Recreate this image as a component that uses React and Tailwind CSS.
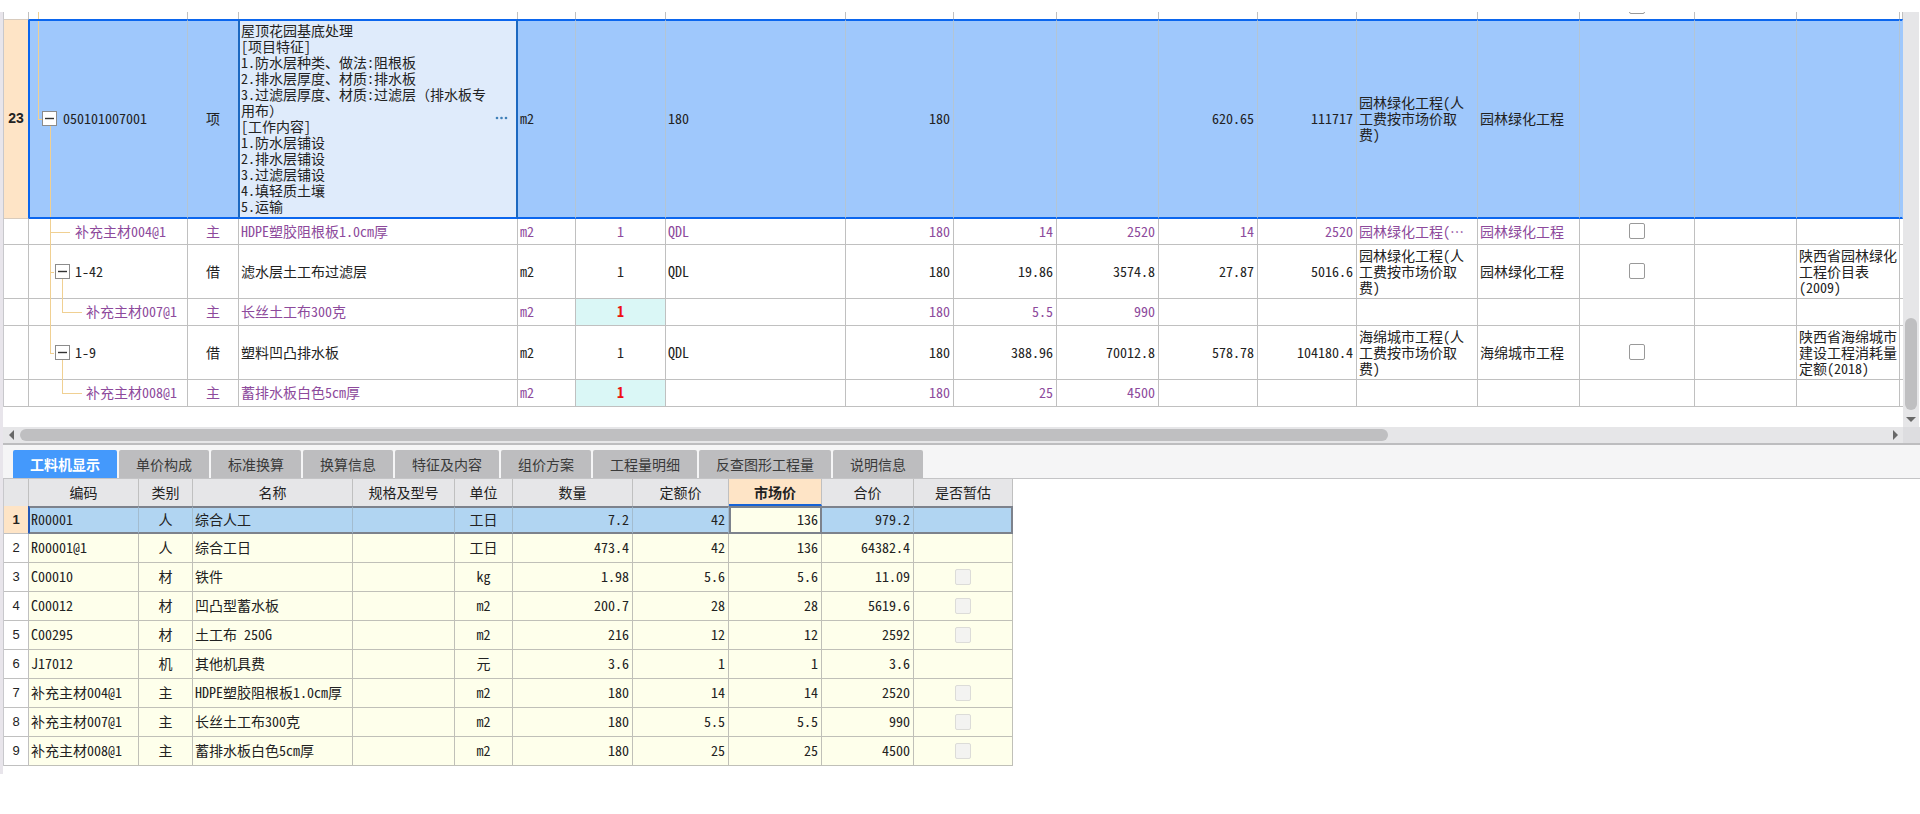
// src/App.jsx
import React, { useState } from 'react';
import clsx from 'clsx';

const FONT = 'font-["Noto_Sans_Mono_CJK_SC","Noto_Sans_CJK_SC",monospace]';

// Lebar kolom tabel atas; kolom tanpa lebar mengisi sisa ruang
const QUOTA_COLS = [
  'w-[25px]', 'w-[159px]', 'w-[51px]', 'w-[279px]', 'w-[58px]', 'w-[90px]', '', 'w-[108px]', 'w-[103px]',
  'w-[102px]', 'w-[99px]', 'w-[99px]', 'w-[121px]', 'w-[102px]', 'w-[115px]', 'w-[102px]', 'w-[103px]', 'w-[3px]',
];

const FEATURES = `屋顶花园基底处理
[项目特征]
1.防水层种类、做法:阻根板
2.排水层厚度、材质:排水板
3.过滤层厚度、材质:过滤层（排水板专
用布）
[工作内容]
1.防水层铺设
2.排水层铺设
3.过滤层铺设
4.填轻质土壤
5.运输`;

// Garis penghubung pohon di kolom kode
const V1_FULL = 'left-[21px] top-0 -bottom-px w-px';
const V1_TOP = 'left-[21px] top-0 bottom-1/2 w-px';
const V2_TOP = 'left-[33px] top-0 bottom-1/2 w-px';
const V2_BOTTOM = 'left-[33px] top-1/2 -bottom-px w-px';
const H1_SHORT = 'left-[21px] top-1/2 w-1 h-px';
const H1_LONG = 'left-[21px] top-1/2 w-5 h-px';
const H2_LONG = 'left-[33px] top-1/2 w-5 h-px';

const QUOTA_ROWS = [
  {
    code: '补充主材004@1', kind: '主', name: 'HDPE塑胶阻根板1.0cm厚', unit: 'm2', factor: '1', expr: 'QDL', qty: '180',
    price: '14', total: '2520', unitCost: '14', sumCost: '2520', fee: '园林绿化工程(⋯', major: '园林绿化工程', check: true,
    height: 'h-[26px]', material: true, indent: 'pl-[46px]', lines: [V1_FULL, H1_LONG],
  },
  {
    code: '1-42', kind: '借', name: '滤水层土工布过滤层', unit: 'm2', factor: '1', expr: 'QDL', qty: '180',
    price: '19.86', total: '3574.8', unitCost: '27.87', sumCost: '5016.6', fee: '园林绿化工程(人\n工费按市场价取\n费)', major: '园林绿化工程', check: true,
    source: '陕西省园林绿化\n工程价目表\n(2009)', height: 'h-[54px]', node: true, indent: 'pl-[46px]', lines: [V1_FULL, H1_SHORT, V2_BOTTOM],
  },
  {
    code: '补充主材007@1', kind: '主', name: '长丝土工布300克', unit: 'm2', factor: '1', qty: '180', price: '5.5', total: '990',
    height: 'h-[27px]', material: true, edited: true, indent: 'pl-[57px]', lines: [V1_FULL, V2_TOP, H2_LONG],
  },
  {
    code: '1-9', kind: '借', name: '塑料凹凸排水板', unit: 'm2', factor: '1', expr: 'QDL', qty: '180',
    price: '388.96', total: '70012.8', unitCost: '578.78', sumCost: '104180.4', fee: '海绵城市工程(人\n工费按市场价取\n费)', major: '海绵城市工程', check: true,
    source: '陕西省海绵城市\n建设工程消耗量\n定额(2018)', height: 'h-[54px]', node: true, indent: 'pl-[46px]', lines: [V1_TOP, H1_SHORT, V2_BOTTOM],
  },
  {
    code: '补充主材008@1', kind: '主', name: '蓄排水板白色5cm厚', unit: 'm2', factor: '1', qty: '180', price: '25', total: '4500',
    height: 'h-[27px]', material: true, edited: true, indent: 'pl-[57px]', lines: [V2_TOP, H2_LONG],
  },
];

const TABS = ['工料机显示', '单价构成', '标准换算', '换算信息', '特征及内容', '组价方案', '工程量明细', '反查图形工程量', '说明信息'];

const RES_COLS = [
  { label: '', width: 'w-[25px]' },
  { label: '编码', width: 'w-[110px]' },
  { label: '类别', width: 'w-[54px]' },
  { label: '名称', width: 'w-[160px]' },
  { label: '规格及型号', width: 'w-[102px]' },
  { label: '单位', width: 'w-[58px]' },
  { label: '数量', width: 'w-[120px]' },
  { label: '定额价', width: 'w-[96px]' },
  { label: '市场价', width: 'w-[93px]' },
  { label: '合价', width: 'w-[92px]' },
  { label: '是否暂估', width: 'w-[99px]' },
];

const RES_ROWS = [
  ['R00001', '人', '综合人工', '工日', '7.2', '42', '136', '979.2', false],
  ['R00001@1', '人', '综合工日', '工日', '473.4', '42', '136', '64382.4', false],
  ['C00010', '材', '铁件', 'kg', '1.98', '5.6', '5.6', '11.09', true],
  ['C00012', '材', '凹凸型蓄水板', 'm2', '200.7', '28', '28', '5619.6', true],
  ['C00295', '材', '土工布 250G', 'm2', '216', '12', '12', '2592', true],
  ['J17012', '机', '其他机具费', '元', '3.6', '1', '1', '3.6', false],
  ['补充主材004@1', '主', 'HDPE塑胶阻根板1.0cm厚', 'm2', '180', '14', '14', '2520', true],
  ['补充主材007@1', '主', '长丝土工布300克', 'm2', '180', '5.5', '5.5', '990', true],
  ['补充主材008@1', '主', '蓄排水板白色5cm厚', 'm2', '180', '25', '25', '4500', true],
];

const TreeLines = ({ lines }) =>
  lines.map((line) => <span key={line} className={clsx('absolute bg-[#f0d092]', line)} />);

const NodeToggle = ({ className }) => (
  <button
    type="button"
    aria-label="折叠"
    className={clsx('absolute top-1/2 -mt-2 size-[15px] border border-[#8c8c8c] bg-white flex items-center justify-center', className)}
  >
    <svg width="9" height="9" viewBox="0 0 9 9" aria-hidden="true">
      <path d="M0 4.5h9" stroke="#333" strokeWidth="1.4" />
    </svg>
  </button>
);

const CheckBox = ({ label, disabled = false }) => (
  <input
    type="checkbox"
    aria-label={label}
    disabled={disabled}
    className={clsx(
      'block shrink-0 mx-auto size-4 appearance-none rounded-xs border checked:bg-[#4499fc]',
      disabled ? 'border-[#dcdcd8] bg-[#f3f3f1]' : 'border-[#999] bg-white',
    )}
  />
);

const Arrow = ({ points }) => (
  <svg width="10" height="10" viewBox="0 0 10 10" fill="#686868" aria-hidden="true">
    <polygon points={points} />
  </svg>
);

const Cell = ({ className, children }) => (
  <td className={clsx('border-r border-b border-[#c0c0c0] pb-0.5 whitespace-pre overflow-hidden', className)}>{children}</td>
);

// Baris terpilih: garis biru di atas dan bawah
const PickedCell = ({ className, children }) => (
  <td className={clsx('border-y-2 border-r border-y-[#0b66ee] bg-[#9fc8fc] pb-0.5 whitespace-pre', className)}>{children}</td>
);

const QuotaTable = () => (
  <table className="w-full table-fixed border-separate border-spacing-0 border-l border-[#c8c8cc] text-sm/4 text-[#222]">
    <colgroup>
      {QUOTA_COLS.map((width, i) => <col key={i} className={width} />)}
    </colgroup>
    <tbody>
      {/* Sisa baris di atas yang tergulung */}
      <tr className="h-[7px]">
        {QUOTA_COLS.map((_, i) => (
          <td key={i} className="relative h-[7px] border-r border-[#c0c0c0] p-0">
            {i === 1 && <TreeLines lines={['left-[9px] top-0 bottom-0 w-px']} />}
            {i === 14 && (
              <div className="flex h-[7px] items-end overflow-hidden pb-[5px]">
                <CheckBox label="上一行" />
              </div>
            )}
          </td>
        ))}
      </tr>
      <tr className="h-[200px]">
        <th scope="row" className='border-y border-r border-y-[#d8cbbd] border-r-[#0b66ee] bg-[#fee4c6] pb-0.5 font-["Liberation_Sans",sans-serif] text-sm/4 font-bold'>23</th>
        <PickedCell className="relative border-l border-l-[#0b66ee] border-r-[#b3c5d4] pl-[33px]">
          <TreeLines lines={['left-[8px] top-0 bottom-1/2 w-px', 'left-[8px] top-1/2 w-1 h-px', 'left-[20px] top-1/2 bottom-0 w-px']} />
          <NodeToggle className="left-[12px]" />
          050101007001
        </PickedCell>
        <PickedCell className="border-r-[#1b68c0] text-center">项</PickedCell>
        <td className="border-y-2 border-l border-r-2 border-y-[#0b66ee] border-x-[#1b68c0] bg-[#dfebfb] pb-0.5 pl-px">
          <div className="flex items-center justify-between pr-2">
            <span className="whitespace-pre">{FEATURES}</span>
            <button type="button" aria-label="编辑项目特征">
              <svg width="13" height="4" viewBox="0 0 13 4" fill="#3f80b8" aria-hidden="true">
                <circle cx="2" cy="2" r="1.3" />
                <circle cx="6.5" cy="2" r="1.3" />
                <circle cx="11" cy="2" r="1.3" />
              </svg>
            </button>
          </div>
        </td>
        <PickedCell className="border-r-[#b3c5d4] pl-0.5">m2</PickedCell>
        <PickedCell className="border-r-[#b3c5d4]" />
        <PickedCell className="border-r-[#b3c5d4] pl-0.5">180</PickedCell>
        <PickedCell className="border-r-[#b3c5d4] pr-[3px] text-right">180</PickedCell>
        <PickedCell className="border-r-[#b3c5d4]" />
        <PickedCell className="border-r-[#b3c5d4]" />
        <PickedCell className="border-r-[#b3c5d4] pr-[3px] text-right">620.65</PickedCell>
        <PickedCell className="border-r-[#b3c5d4] pr-[3px] text-right">111717</PickedCell>
        <PickedCell className="border-r-[#b3c5d4] pl-0.5">{'园林绿化工程(人\n工费按市场价取\n费)'}</PickedCell>
        <PickedCell className="border-r-[#b3c5d4] pl-0.5">园林绿化工程</PickedCell>
        <PickedCell className="border-r-[#b3c5d4]" />
        <PickedCell className="border-r-[#b3c5d4]" />
        <PickedCell className="border-r-[#b3c5d4]" />
        <PickedCell className="border-r-[#9fc8fc]" />
      </tr>
      {QUOTA_ROWS.map((row) => (
        <tr key={row.code} className={clsx(row.height, row.material && 'text-[#8d4a9c]')}>
          <Cell />
          <td className={clsx('relative border-r border-b border-[#c0c0c0] pb-0.5 whitespace-pre', row.indent)}>
            <TreeLines lines={row.lines} />
            {row.node && <NodeToggle className="left-[26px]" />}
            {row.code}
          </td>
          <Cell className="text-center">{row.kind}</Cell>
          <Cell className="pl-0.5">{row.name}</Cell>
          <Cell className="pl-0.5">{row.unit}</Cell>
          <Cell className={clsx('text-center', row.edited && 'bg-[#daf7f6] font-bold text-[#ee1111]')}>{row.factor}</Cell>
          <Cell className="pl-0.5">{row.expr}</Cell>
          <Cell className="pr-[3px] text-right">{row.qty}</Cell>
          <Cell className="pr-[3px] text-right">{row.price}</Cell>
          <Cell className="pr-[3px] text-right">{row.total}</Cell>
          <Cell className="pr-[3px] text-right">{row.unitCost}</Cell>
          <Cell className="pr-[3px] text-right">{row.sumCost}</Cell>
          <Cell className="pl-0.5">{row.fee}</Cell>
          <Cell className="pl-0.5">{row.major}</Cell>
          <Cell>{row.check && <CheckBox label={row.code} />}</Cell>
          <Cell />
          <Cell className="pl-0.5">{row.source}</Cell>
          <td className="border-b border-[#c0c0c0]" />
        </tr>
      ))}
    </tbody>
  </table>
);

const ResourceTable = () => (
  <table className="w-[1010px] table-fixed border-separate border-spacing-0 border-l border-[#c8c8cc] text-sm/4 text-[#222]">
    <thead>
      <tr className="h-[27px]">
        {RES_COLS.map(({ label, width }) => (
          <th
            key={label}
            scope="col"
            className={clsx(
              'border-r border-r-[#c0c0c0]',
              width,
              label === '市场价' ? 'border-b-2 border-b-[#1763d6] bg-[#fee4c6] font-bold' : 'bg-[#e6e6e8] pb-0.5 font-normal',
            )}
          >
            {label}
          </th>
        ))}
      </tr>
    </thead>
    <tbody>
      {RES_ROWS.map(([code, kind, name, unit, qty, base, market, total, estimate], i) => {
        const picked = i === 0;
        const cell = clsx(
          'border-r pb-0.5 whitespace-pre',
          picked ? 'border-y-2 border-y-[#7d828c] border-r-[#a3bccf] bg-[#b1d5f2]' : 'border-b border-[#c0c0b8] bg-[#feffeb]',
        );
        return (
          <tr key={code} className={picked ? 'h-7' : 'h-[29px]'}>
            <th
              scope="row"
              className={clsx(
                'border-r border-b border-b-[#c0c0c0] font-["Liberation_Sans",sans-serif] text-[13px]/4',
                picked ? 'border-r-[#2458b8] bg-[#fee4c6] font-bold' : 'border-r-[#c0c0c0] font-normal',
              )}
            >
              {i + 1}
            </th>
            <td className={clsx(cell, picked ? 'border-l border-l-[#2458b8] pl-px' : 'pl-0.5')}>{code}</td>
            <td className={clsx(cell, 'text-center')}>{kind}</td>
            <td className={clsx(cell, 'pl-0.5')}>{name}</td>
            <td className={cell} />
            <td className={clsx(cell, 'text-center')}>{unit}</td>
            <td className={clsx(cell, 'pr-[3px] text-right')}>{qty}</td>
            <td className={clsx(cell, 'pr-[3px] text-right')}>{base}</td>
            {picked ? (
              <td className="border-2 border-[#7d828c] bg-[#feffeb] pb-0.5 pr-0.5 text-right">{market}</td>
            ) : (
              <td className={clsx(cell, 'pr-[3px] text-right')}>{market}</td>
            )}
            <td className={clsx(cell, 'pr-[3px] text-right')}>{total}</td>
            {picked ? (
              <td className="border-y-2 border-r-2 border-[#7d828c] bg-[#b1d5f2]" />
            ) : (
              <td className="border-r border-b border-[#c0c0b8] bg-[#feffeb]">{estimate && <CheckBox label={code} disabled />}</td>
            )}
          </tr>
        );
      })}
    </tbody>
  </table>
);

export default function App() {
  const [activeTab, setActiveTab] = useState(TABS[0]);

  return (
    <main className={clsx('bg-white pt-3', FONT)}>
      <div className="border-l-[3px] border-[#e8e5eb] pb-2">
        {/* Panel atas: daftar item dan scrollbar */}
        <section className="flex pr-px">
          <div className="min-w-0 flex-1">
            <QuotaTable />
            <div className="h-5" />
          </div>
          <div className="flex w-4 flex-col items-center bg-[#e6e6e8]">
            <div className="flex-1" />
            <div className="h-[92px] w-3 rounded-full bg-[#bfbfc1]" />
            <div className="flex h-[17px] items-center">
              <Arrow points="0,3 10,3 5,8" />
            </div>
          </div>
        </section>
        <div className="flex h-4 items-center bg-[#e6e6e8]">
          <div className="flex w-[17px] justify-center">
            <Arrow points="7,0 7,10 2,5" />
          </div>
          <div className="flex flex-1">
            <div className="h-3 flex-[1368] rounded-full bg-[#bfbfc1]" />
            <div className="flex-[499]" />
          </div>
          <div className="flex w-4 justify-center">
            <Arrow points="3,0 3,10 8,5" />
          </div>
          <div className="h-4 w-[17px] bg-[#dddde0]" />
        </div>

        {/* Panel bawah: tab dan rincian sumber daya */}
        <section className="border-t-2 border-[#bdbdbf]">
          <div role="tablist" className='flex h-[34px] items-end gap-0.5 border-b border-[#c4c4c6] bg-[#f5f5f6] pl-2.5 font-["Noto_Sans_CJK_SC",sans-serif]'>
            {TABS.map((tab) => (
              <button
                key={tab}
                type="button"
                role="tab"
                aria-selected={tab === activeTab}
                onClick={() => setActiveTab(tab)}
                className={clsx(
                  'h-7 rounded-t-xs px-[17px] text-sm',
                  tab === activeTab ? 'bg-[#4499fc] font-bold text-white' : 'bg-[#bdbdbf] text-[#3a3a3a]',
                )}
              >
                {tab}
              </button>
            ))}
          </div>
          <ResourceTable />
        </section>
      </div>
    </main>
  );
}
